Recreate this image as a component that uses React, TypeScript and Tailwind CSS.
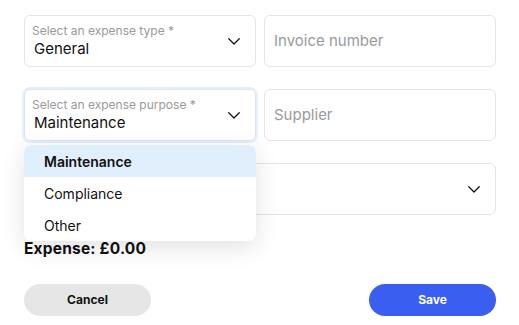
import React from "react";

const Chevron = () => (
  <svg width="18" height="18" viewBox="0 0 24 24" fill="none" stroke="#111" strokeWidth="1.7" strokeLinecap="round" strokeLinejoin="round">
    <path d="M5 9l7 7 7-7" />
  </svg>
);

export default function App() {
  return (
    <div className="w-[519px] h-[325px] bg-white relative" style={{ fontFamily: "Inter, 'Noto Sans', sans-serif" }}>
      <div className="px-[24px] pt-[15px] flex flex-col gap-[22px] w-[520px]">
        <div className="grid grid-cols-[232px_232px] gap-[8px]">
          <div className="h-[52px] border border-[#e5e5e5] rounded-[6px] flex items-center justify-between pl-[7px] pr-[12px]">
            <div className="flex flex-col">
              <span className="text-[12px] leading-[14px] text-[#9a9a9a]">Select an expense type *</span>
              <span className="text-[15px] leading-[18px] text-[#111] pl-[2px] mt-[2px]">General</span>
            </div>
            <Chevron />
          </div>
          <div className="h-[52px] border border-[#e5e5e5] rounded-[6px] flex items-center px-[9px]">
            <span className="text-[15px] text-[#9a9a9a]">Invoice number</span>
          </div>
        </div>
        <div className="grid grid-cols-[232px_232px] gap-[8px]">
          <div className="h-[52px] border border-[#d6e6f7] rounded-[6px] ring-2 ring-[#e6f0fb] flex items-center justify-between pl-[7px] pr-[12px]">
            <div className="flex flex-col">
              <span className="text-[12px] leading-[14px] text-[#9a9a9a]">Select an expense purpose *</span>
              <span className="text-[15px] leading-[18px] text-[#111] pl-[2px] mt-[2px]">Maintenance</span>
            </div>
            <Chevron />
          </div>
          <div className="h-[52px] border border-[#e5e5e5] rounded-[6px] flex items-center px-[9px]">
            <span className="text-[15px] text-[#9a9a9a]">Supplier</span>
          </div>
        </div>
        <div className="h-[52px] w-[472px] border border-[#e5e5e5] rounded-[6px] flex items-center justify-end pr-[12px]">
          <Chevron />
        </div>
      </div>
      <div className="px-[24px] mt-[21px]">
        <span className="text-[15.5px] font-bold text-[#111] tracking-[0.2px]">Expense: £0.00</span>
      </div>
      <div className="ml-[24px] mt-[24px] flex justify-between w-[472px]">
        <button className="w-[127px] h-[32px] rounded-full bg-[#e6e6e6] text-[12px] font-bold text-[#111]">Cancel</button>
        <button className="w-[127px] h-[32px] rounded-full bg-[#3a5ff0] text-[12px] font-bold text-white">Save</button>
      </div>
      <div className="absolute left-[24px] top-[145px] w-[232px] bg-white rounded-[8px] shadow-[0_6px_24px_rgba(0,0,0,0.12)] overflow-hidden">
        <div className="h-[32px] bg-[#e1effd] flex items-center pl-[20px] text-[14px] font-semibold text-[#111]">Maintenance</div>
        <div className="h-[32px] flex items-center pl-[20px] text-[14px] text-[#111]">Compliance</div>
        <div className="h-[32px] flex items-center pl-[20px] text-[14px] text-[#111]">Other</div>
      </div>
    </div>
  );
}
